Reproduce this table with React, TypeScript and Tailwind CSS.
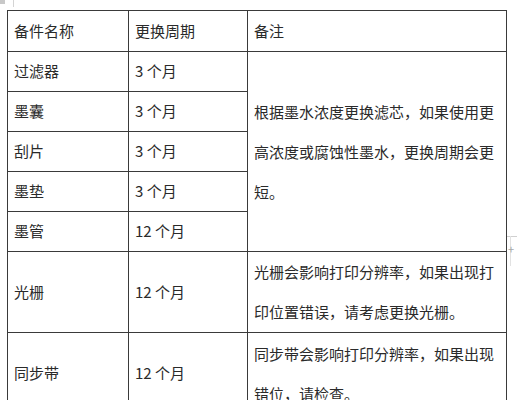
const rows: { name: string; cycle: string }[] = [
  { name: '过滤器', cycle: '3 个月' },
  { name: '墨囊', cycle: '3 个月' },
  { name: '刮片', cycle: '3 个月' },
  { name: '墨垫', cycle: '3 个月' },
  { name: '墨管', cycle: '12 个月' },
];

const cell = 'border border-[#3a3a3a] px-[6px] align-middle text-left font-normal';

export default function App() {
  return (
    <div
      className="relative w-[517px] h-[400px] overflow-hidden bg-white text-[15px] text-[#2a2a2a]"
      style={{ fontFamily: '"Noto Sans CJK SC", "Noto Sans", sans-serif' }}
    >
      {/* word table handle bits */}
      <div className="absolute left-0 top-0 w-[5px] h-[4px] bg-[#c8c8c8]" />
      <div className="absolute left-[13px] top-0 w-px h-[7px] bg-[#d4d4d4]" />
      <div className="absolute left-[507px] top-[236px] w-[10px] h-px bg-[#d0d0d0]" />
      <div className="absolute left-[510px] top-[236px] w-px h-[30px] bg-[#e2e2e2]" />
      <div className="absolute left-[508px] top-[244px] text-[11px] leading-none text-[#a8a8a8]">+</div>

      <div className="pl-[7px] pt-[10px]">
        <table className="border-collapse table-fixed w-[499px]">
          <colgroup>
            <col className="w-[121px]" />
            <col className="w-[119px]" />
            <col className="w-[259px]" />
          </colgroup>
          <thead>
            <tr className="h-[41px]">
              <th className={cell}>备件名称</th>
              <th className={cell}>更换周期</th>
              <th className={cell}>备注</th>
            </tr>
          </thead>
          <tbody>
            {rows.map((r, i) => (
              <tr key={r.name} className="h-[40px]">
                <td className={cell}>{r.name}</td>
                <td className={cell}>{r.cycle}</td>
                {i === 0 && (
                  <td rowSpan={5} className={`${cell} leading-[40px]`}>
                    根据墨水浓度更换滤芯，如果使用更高浓度或腐蚀性墨水，更换周期会更短。
                  </td>
                )}
              </tr>
            ))}
            <tr className="h-[80px]">
              <td className={cell}>光栅</td>
              <td className={cell}>12 个月</td>
              <td className={`${cell} leading-[40px]`}>
                光栅会影响打印分辨率，如果出现打印位置错误，请考虑更换光栅。
              </td>
            </tr>
            <tr className="h-[82px]">
              <td className={cell}>同步带</td>
              <td className={cell}>12 个月</td>
              <td className={`${cell} leading-[40px]`}>
                同步带会影响打印分辨率，如果出现错位，请检查。
              </td>
            </tr>
          </tbody>
        </table>
      </div>
    </div>
  );
}
